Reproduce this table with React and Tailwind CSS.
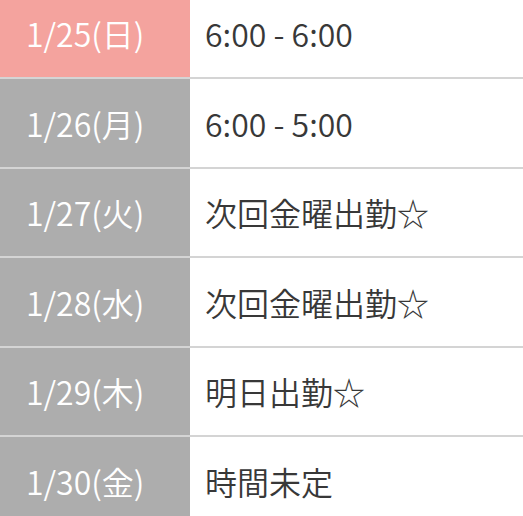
const rows = [
  { date: "1/25(日)", text: "6:00 - 6:00", today: true },
  { date: "1/26(月)", text: "6:00 - 5:00" },
  { date: "1/27(火)", text: "次回金曜出勤☆" },
  { date: "1/28(水)", text: "次回金曜出勤☆" },
  { date: "1/29(木)", text: "明日出勤☆" },
  { date: "1/30(金)", text: "時間未定" },
];

export default function App() {
  return (
    <div
      className="h-[516px] w-[523px] overflow-hidden bg-white font-[350]"
      style={{ fontFamily: '"Noto Sans CJK JP", "Noto Sans", sans-serif' }}
    >
      <div className="-mt-[10.5px]">
        {rows.map((row, i) => (
          <div
            key={row.date}
            className={`flex h-[87.5px] ${i > 0 ? "box-content border-t-2 border-[#d4d4d4]" : ""}`}
          >
            <div
              className={`flex w-[190px] shrink-0 items-center pl-[26px] text-[32px] text-white ${
                row.today ? "bg-[#f4a39e]" : "bg-[#adadad]"
              }`}
            >
              {row.date}
            </div>
            <div className="flex flex-1 items-center pl-[15px] text-[32px] text-[#383838]">
              {row.text}
            </div>
          </div>
        ))}
      </div>
    </div>
  );
}
